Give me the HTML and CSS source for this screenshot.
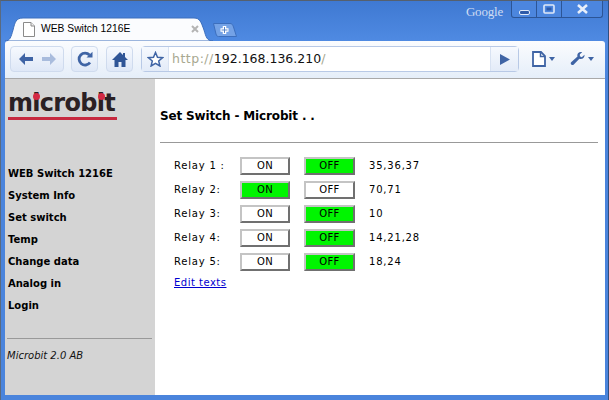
FILE: index.html
```html
<!DOCTYPE html>
<html lang="en">
<head>
<meta charset="utf-8">
<title>WEB Switch 1216E</title>
<link rel="stylesheet" href="styles.css">
</head>
<body>
<div class="window">
  <div class="controls">
    <span class="google">Google</span>
    <div class="ctrl-group">
      <span class="ctrl ctrl-min"><svg width="11" height="5" viewBox="0 0 11 5"><rect x=".5" y=".5" width="10" height="4" rx="1.5" fill="#2e5aa8" stroke="#dfe9f8"/></svg></span>
      <span class="ctrl ctrl-max"><svg width="12" height="10" viewBox="0 0 12 10"><rect x="1" y="1" width="10" height="8" rx="1" fill="none" stroke="#dfe9f8" stroke-width="1.6"/><rect x="3.5" y="3.5" width="5" height="3" fill="#2e5aa8"/></svg></span>
      <span class="ctrl ctrl-close"><svg width="13" height="10" viewBox="0 0 13 10"><path d="M2 1l9 8M11 1l-9 8" stroke="#e8effa" stroke-width="2.6" fill="none"/></svg></span>
    </div>
  </div>
  <div class="tabstrip">
    <div class="tab">
      <svg class="tab-bg" width="208" height="24" viewBox="0 0 208 24"><path d="M0 24C5 24 6 20 8 13C10 5 11 1 18 1H189C195 1 196 5 199 13C201 20 202 24 208 24Z" fill="#fbfcfe" stroke="#3d6fbd" stroke-width="1"/></svg>
      <svg class="tab-icon" width="12" height="15" viewBox="0 0 12 15"><path d="M.5.5H8L11.500 4V14.500H.5Z" fill="#fff" stroke="#8a8a8a"/><path d="M8 .5V4H11.500" fill="#eee" stroke="#8a8a8a"/></svg>
      <span class="tab-title">WEB Switch 1216E</span>
      <svg class="tab-close" width="8" height="8" viewBox="0 0 8 8"><path d="M1 1l6 6M7 1l-6 6" stroke="#b4b4b4" stroke-width="2"/></svg>
    </div>
    <svg class="newtab" width="24" height="14" viewBox="0 0 24 14"><path d="M.5 .5H17C19 .5 19.500 1.500 20.500 4L23.500 13.500H5.500C4 13.500 3.500 12.500 3 11Z" fill="#74a2e6" stroke="#3d6fbd"/><path d="M11.500 3v8M7.500 7h8" stroke="#fff" stroke-width="3.500"/><path d="M11.500 4v6M8.500 7h6" stroke="#5b86c8" stroke-width="1"/></svg>
  </div>
  <div class="toolbar">
    <div class="tbtn tbtn-nav">
      <svg width="16" height="14" viewBox="0 0 16 14"><path d="M7 1L1 7l6 6V9h8V5H7Z" fill="#3f64a5"/></svg>
      <svg width="16" height="14" viewBox="0 0 16 14"><path d="M9 1l6 6-6 6V9H1V5h8Z" fill="#a9bcdd"/></svg>
    </div>
    <div class="tbtn tbtn-one">
      <svg width="16" height="16" viewBox="0 0 16 16"><path d="M13 11.500A6 6 0 1 1 12.500 4" fill="none" stroke="#3f64a5" stroke-width="2.800"/><path d="M9.500 6.500H15.500V.8Z" fill="#3f64a5"/></svg>
    </div>
    <div class="tbtn tbtn-one">
      <svg width="16" height="15" viewBox="0 0 16 15"><path d="M8 0L0 8h2.500v7h4v-5h3v5h4V8H16l-3-3V1h-2v2Z" fill="#2f5596"/></svg>
    </div>
    <div class="omnibox">
      <div class="star"><svg width="17" height="16" viewBox="0 0 17 16"><path d="M8.500 1.500l2 4.800 5 .4-3.800 3.300 1.200 5-4.400-2.700-4.400 2.700 1.200-5L1.500 6.700l5-.4Z" fill="#fff" stroke="#3f64a5" stroke-width="1.500"/></svg></div>
      <div class="url"><span class="url-dim">http://</span>192.168.136.210<span class="url-dim">/</span></div>
      <div class="go"><svg width="10" height="11" viewBox="0 0 10 11"><path d="M0 0l10 5.500L0 11Z" fill="#3f64a5"/></svg></div>
    </div>
    <div class="menus">
      <div class="menu-btn"><svg width="14" height="16" viewBox="0 0 14 16"><path d="M1 1H9L13 5V15H1Z" fill="#fff" stroke="#3f64a5" stroke-width="1.800"/><path d="M8.500 1V5.500H13" fill="none" stroke="#3f64a5" stroke-width="1.500"/></svg><i class="caret"></i></div>
      <div class="menu-btn"><svg width="16" height="16" viewBox="0 0 16 16"><path d="M15.500 3.500L12.500 6 10.500 5V2.800L13 .8C10.500-.2 7.800 1.300 7.800 4c0 .6.100 1 .2 1.400L1.200 11.500C-.2 13 2.200 15.500 3.800 14L10 7.800c3 .9 5.800-1.100 5.500-4.300Z" fill="#3f64a5"/></svg><i class="caret"></i></div>
    </div>
  </div>
  <div class="page">
    <aside class="sidebar">
      <div class="logo"><span class="logo-text">microbit</span><i class="dot dot-a"></i><i class="dot dot-b"></i></div>
      <nav class="nav">
        <a>WEB Switch 1216E</a>
        <a>System Info</a>
        <a>Set switch</a>
        <a>Temp</a>
        <a>Change data</a>
        <a>Analog in</a>
        <a>Login</a>
      </nav>
      <hr class="side-rule">
      <div class="copyright">Microbit 2.0 AB</div>
    </aside>
    <main class="main">
      <h1 class="title">Set Switch - Microbit . .</h1>
      <hr class="main-rule">
      <div class="relays">
        <span class="label">Relay 1 :</span><button class="sw">ON</button><button class="sw sw-active">OFF</button><span class="ids">35,36,37</span>
        <span class="label">Relay 2:</span><button class="sw sw-active">ON</button><button class="sw">OFF</button><span class="ids">70,71</span>
        <span class="label">Relay 3:</span><button class="sw">ON</button><button class="sw sw-active">OFF</button><span class="ids">10</span>
        <span class="label">Relay 4:</span><button class="sw">ON</button><button class="sw sw-active">OFF</button><span class="ids">14,21,28</span>
        <span class="label">Relay 5:</span><button class="sw">ON</button><button class="sw sw-active">OFF</button><span class="ids">18,24</span>
      </div>
      <a class="edit" href="#">Edit texts</a>
    </main>
  </div>
</div>
</body>
</html>
```

FILE: styles.css
```css
* { box-sizing: border-box; }
html, body { margin: 0; padding: 0; }
body { width: 609px; height: 400px; overflow: hidden; font-family: "DejaVu Sans", Verdana, sans-serif; color: #000; }

.window {
  position: relative;
  width: 609px;
  height: 400px;
  display: flex;
  flex-direction: column;
  padding: 1px 3px 5px 4px;
  background: #4a84dc;
  background-image: linear-gradient(#3f79d2 0, #4f8ae2 40px, #4a84dc 80px);
  border-top: 1px solid #55606e;
  border-right: 1px solid #2f4f80;
  border-left: 1px solid #5a6a80;
}

.controls { position: absolute; top: 0; right: 5px; display: flex; align-items: flex-start; }
.google { margin: 2px 8px 0 0; font: 13px/18px "Liberation Serif", serif; color: #cfdcf2; letter-spacing: -.2px; }
.ctrl-group { display: flex; height: 17px; border: 1px solid #2c5596; border-top: 0; border-radius: 0 0 3px 3px; background: #4c86de; }
.ctrl { display: flex; align-items: center; justify-content: center; height: 16px; border-right: 1px solid #2c5596; }
.ctrl-min { width: 25px; padding-top: 6px; }
.ctrl-max { width: 25px; }
.ctrl-close { width: 40px; border-right: 0; }

.tabstrip { display: flex; align-items: flex-start; height: 39px; padding: 15px 0 0 0; }
.tab { position: relative; width: 208px; height: 24px; display: flex; align-items: center; padding: 0 0 0 18px; }
.tab-bg { position: absolute; top: 0; left: 0; }
.tab-icon, .tab-title, .tab-close { position: relative; }
.tab-title { margin-left: 6px; font: 10.300px/16px "Liberation Sans", Arial, sans-serif; width: 150px; white-space: nowrap; }
.tab-close { margin-left: 0; }
.newtab { margin: 6px 0 0 0; flex: none; }

.toolbar {
  height: 38px;
  display: flex;
  align-items: center;
  padding: 0 0 1px 5px;
  background: linear-gradient(#fbfcfe, #e5eef9);
  border-bottom: 1px solid #a9a9a9;
  border-radius: 3px 3px 0 0;
}
.tbtn { height: 26px; display: flex; align-items: center; justify-content: center; border: 1px solid #cfdbee; border-radius: 4px; background: linear-gradient(#f6f9fe, #dfe8f7); }
.tbtn-nav { width: 54px; gap: 7px; margin-right: 7px; }
.tbtn-one { width: 27px; margin-right: 8px; }
.omnibox { width: 378px; height: 26px; display: flex; border: 1px solid #b8c9e6; border-radius: 4px; background: #fff; }
.star { width: 27px; display: flex; align-items: center; justify-content: center; background: linear-gradient(#f6f9fe, #e3ebf8); border-right: 1px solid #d8e2f2; }
.url { flex: 1; padding-left: 3px; font: 12.500px/24px "DejaVu Sans", Verdana, sans-serif; white-space: nowrap; color: #111; }
.url-dim { color: #a8a890; letter-spacing: .5px; }
.go { width: 28px; display: flex; align-items: center; justify-content: center; background: linear-gradient(#f6f9fe, #e3ebf8); border-left: 1px solid #d8e2f2; }
.menus { display: flex; gap: 14px; margin-left: 13px; }
.menu-btn { display: flex; align-items: center; gap: 3px; width: 24px; }
.caret { width: 0; height: 0; border: 3.500px solid transparent; border-top: 4px solid #3f64a5; border-bottom: 0; flex: none; }

.page { flex: 1; display: flex; background: #fff; min-height: 0; }

.sidebar { width: 150px; background: #d4d4d4; padding: 9px 0 0 3px; }
.logo { position: relative; width: 109px; height: 32px; }
.logo-text {
  display: block;
  height: 32px;
  padding-top: 3px;
  font: bold 24px/25px "DejaVu Sans", Verdana, sans-serif;
  letter-spacing: -.7px;
  color: #2a2023;
  border-bottom: 3px solid #c6293f;
  white-space: nowrap;
}
.dot { position: absolute; top: 5px; width: 7px; height: 7px; border-radius: 50%; background: #d42a44; }
.dot-a { left: 25px; }
.dot-b { left: 90px; }

.nav { display: flex; flex-direction: column; margin-top: 43px; }
.nav a { height: 22px; font: bold 10px/22px "DejaVu Sans", Verdana, sans-serif; color: #000; white-space: nowrap; }
.side-rule { width: 145px; height: 0; margin: 21px 0 0 -1px; border: 0; border-top: 1px solid #999; }
.copyright { margin: 10px 0 0 -1px; font: italic 10px/13px "DejaVu Sans", Verdana, sans-serif; color: #111; }

.main { flex: 1; padding: 28px 7px 0 5px; }
.title { margin: 0; font: bold 12px/18px "DejaVu Sans", Verdana, sans-serif; letter-spacing: -.15px; }
.main-rule { height: 0; margin: 17px 0 0; border: 0; border-top: 1px solid #999; }
.relays { display: grid; grid-template-columns: 52px 50px 51px auto; column-gap: 14px; row-gap: 6px; justify-content: start; align-items: center; margin: 14px 0 0 14px; }
.label, .ids { font: 10px/18px "DejaVu Sans", Verdana, sans-serif; letter-spacing: .8px; white-space: nowrap; }
.sw {
  height: 18px;
  padding: 0;
  font: 10px/14px "DejaVu Sans", Verdana, sans-serif;
  letter-spacing: .3px;
  color: #000;
  background: #fff;
  border: 2px solid;
  border-color: #c4c4c4 #707070 #707070 #c4c4c4;
}
.sw-active { background: #00f500; }
.edit { display: inline-block; margin: 5px 0 0 14px; font: 10px/13px "DejaVu Sans", Verdana, sans-serif; letter-spacing: .5px; color: #0000d0; text-decoration: underline; }
```
